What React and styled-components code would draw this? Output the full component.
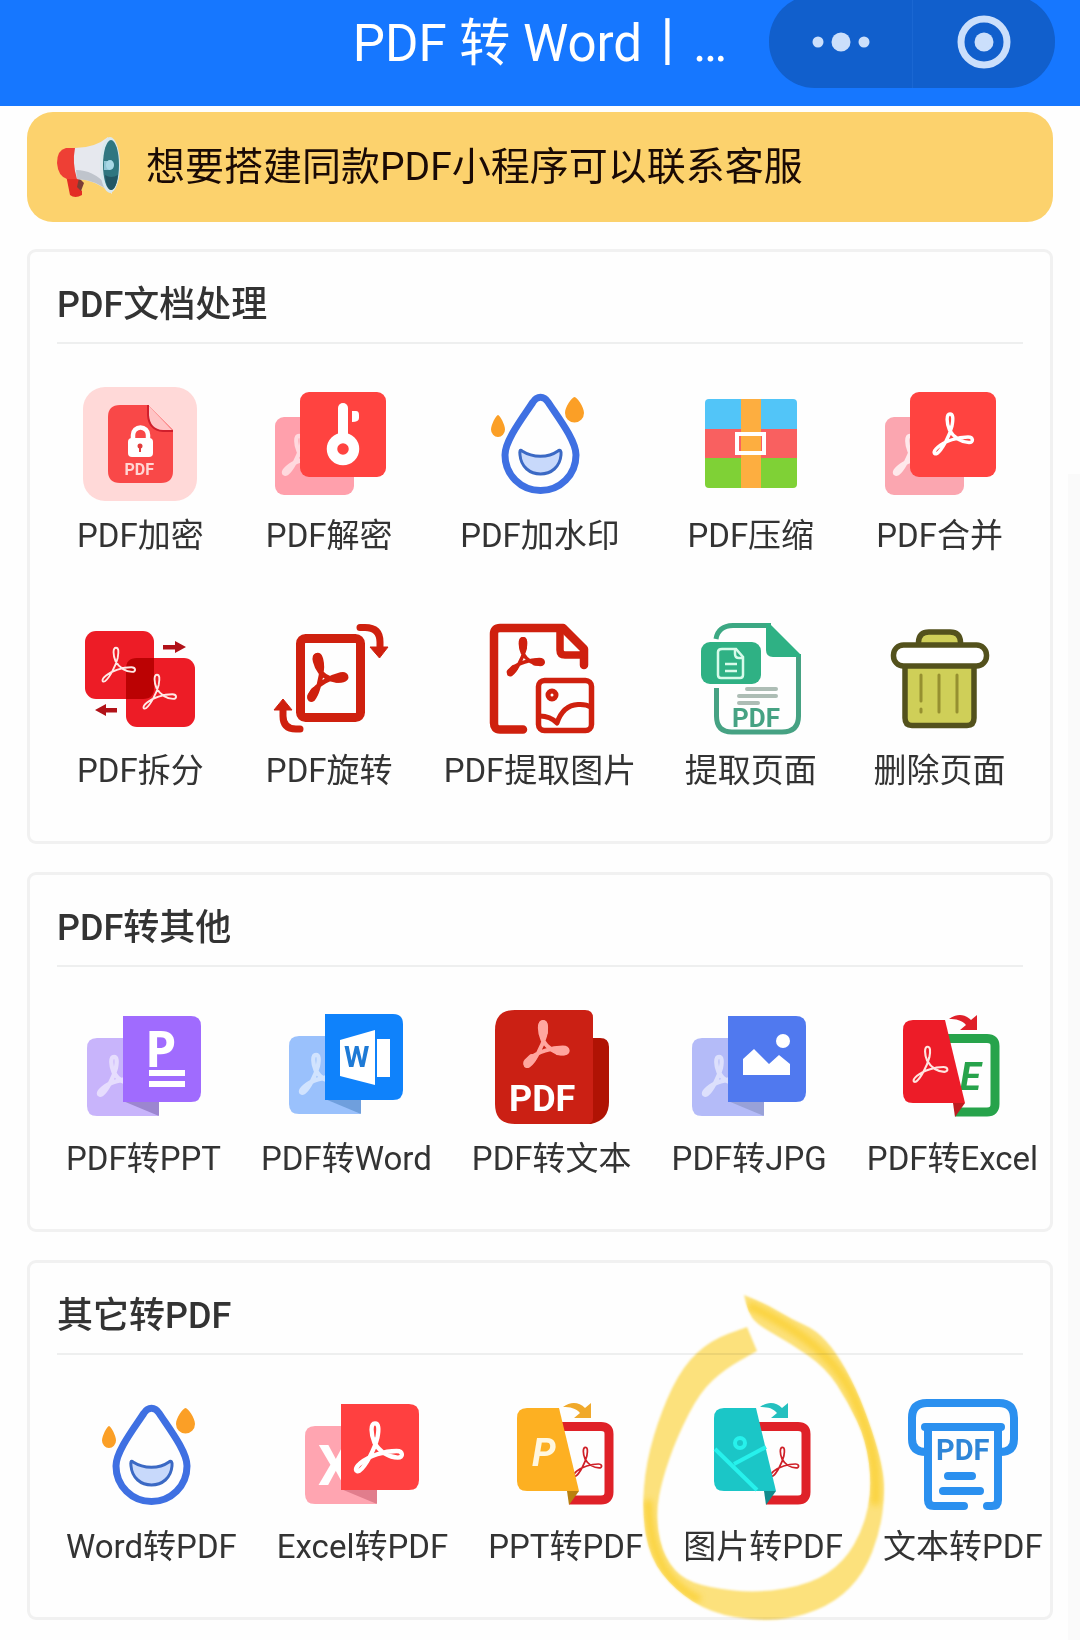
import React from "react";
import styled, { createGlobalStyle } from "styled-components";

const GlobalStyle = createGlobalStyle`
  * { box-sizing: border-box; }
  body {
    margin: 0;
    background: #fefefe;
    color: #333;
    font-family: Roboto, "Noto Sans CJK SC", sans-serif;
  }
  button { font: inherit; color: inherit; background: none; border: 0; padding: 0; cursor: pointer; }
`;

const Page = styled.div`
  position: relative;
  min-height: 100vh;
`;

const ScrollTrack = styled.div`
  position: absolute;
  top: 474px;
  right: 0;
  bottom: 0;
  width: 12px;
  background: #fafafa;
`;

const TopBar = styled.header`
  position: relative;
  display: flex;
  justify-content: center;
  height: 106px;
  padding-top: 9px;
  overflow: hidden;
  background: #1677ff;
`;

const AppTitle = styled.h1`
  margin: 0;
  font-size: 51px;
  font-weight: 400;
  line-height: 70px;
  color: #fff;
  white-space: nowrap;
`;

const Capsule = styled.div`
  position: absolute;
  top: -5px;
  right: 25px;
  display: flex;
  width: 286px;
  height: 93px;
  border-radius: 46px;
  background: #115fcc;
`;

const CapsuleButton = styled.button`
  flex: 1;
  display: flex;
  align-items: center;
  justify-content: center;
  & + & { box-shadow: inset 1px 0 0 #1a67d2; }
`;

const Content = styled.main`
  display: flex;
  flex-direction: column;
  padding: 6px 27px 21px;
`;

const Notice = styled.section`
  display: flex;
  align-items: center;
  gap: 24px;
  height: 110px;
  margin-bottom: 27px;
  padding: 0 30px;
  border-radius: 26px;
  background: #fcd26d;
`;

const NoticeText = styled.p`
  margin: 0;
  font-size: 39px;
  line-height: 54px;
  color: #1a0a05;
`;

const Cards = styled.div`
  display: flex;
  flex-direction: column;
  gap: 28px;
`;

const Card = styled.section`
  padding: 28px 27px 47px;
  border: 3px solid #f1f1f1;
  border-radius: 9px;
`;

const CardTitle = styled.h2`
  margin: 0 0 43px;
  padding-bottom: 12px;
  border-bottom: 2px solid #eeefef;
  font-size: 36px;
  font-weight: 500;
  line-height: 50px;
`;

const Grid = styled.div`
  display: grid;
  grid-template-columns: repeat(5, 1fr);
  row-gap: 63px;
  margin: 0 -11px;
`;

const Tile = styled.button`
  position: relative;
  display: flex;
  flex-direction: column;
  align-items: center;
  gap: 12px;
  padding: 0 20px;
  white-space: nowrap;
`;

const Label = styled.span`
  font-size: 33px;
  line-height: 46px;
`;

const IconSvg = styled.svg`
  display: block;
  width: 114px;
  height: 114px;
  overflow: visible;
  font-family: Roboto, sans-serif;
  font-weight: 700;
`;

const Marker = styled.svg`
  position: absolute;
  top: -108px;
  left: 50%;
  width: 260px;
  height: 340px;
  margin-left: -132px;
  overflow: visible;
  mix-blend-mode: multiply;
  pointer-events: none;
`;

const Icon = ({ children }) => (
  <IconSvg viewBox="0 0 114 114" fill="none" aria-hidden="true">
    {children}
  </IconSvg>
);

/* Three-lobed Acrobat ribbon on a 46-unit square */
const Ribbon = ({ x, y, s = 1, color = "#fff", w = 3.4, opacity = 1, turn = 0, solid }) => (
  <g transform={`translate(${x} ${y}) rotate(${turn}) scale(${s})`} stroke={color} opacity={opacity}>
    <path
      d="M20 2C16 2 16.500 11 19.500 18C24 26 32 30.500 39 30.500C44 30.500 43.500 25 38 25C28 25 15 29 8 35C2 40 4 43 7 41.500C12 38 19.500 24 22 14C23.500 6 23 2 20 2Z"
      strokeWidth={w}
      strokeLinejoin="round"
    />
    {solid && <path d="M20 4L20.500 11M39 28H34M6 39L10 35" strokeWidth="8" strokeLinecap="round" />}
  </g>
);

const Encrypt = () => (
  <Icon>
    <rect width="114" height="114" rx="22" fill="#ffd9d8" />
    <path d="M37 18H65L90 43V84Q90 96 78 96H37Q25 96 25 84V30Q25 18 37 18Z" fill="#f94848" />
    <path d="M65 18L90 44H80Q65 42 65 28Z" fill="#ffc4c5" />
    <path d="M65 18V28Q66 43 80 44H90" stroke="#d01f2c" strokeWidth="2" />
    <path d="M50 53V48a7.5 7.500 0 0 1 15 0V53" stroke="#fff" strokeWidth="4.500" />
    <rect x="45" y="51" width="25" height="19" rx="4" fill="#fff" />
    <circle cx="57" cy="59" r="2.500" fill="#e23c3c" />
    <path d="M57 60V65" stroke="#e23c3c" strokeWidth="2" />
    <text x="41.500" y="88" fontSize="16" fill="#ffd5d3">PDF</text>
  </Icon>
);

const Decrypt = () => (
  <Icon>
    <rect x="3" y="30" width="79" height="78" rx="9" fill="#ffa0ac" />
    <Ribbon x={8} y={47} s={0.95} w={4.5} opacity={0.6} />
    <rect x="28" y="5" width="86" height="85" rx="9" fill="#ff4340" />
    <path d="M71 21V48" stroke="#fff" strokeWidth="10" strokeLinecap="round" />
    <path d="M80 24H84Q87 24 87 28V31Q87 35 80 35Z" fill="#fff" />
    <circle cx="71" cy="62" r="11" stroke="#fff" strokeWidth="10.500" />
  </Icon>
);

const Droplet = () => (
  <Icon>
    <path
      d="M50 15C54 8.500 61 8.500 65 15C74 29 93 53 93 68C93 88 77 103.500 57.500 103.500C38 103.500 22 88 22 68C22 53 41 29 50 15Z"
      stroke="#3f70e2"
      strokeWidth="7"
    />
    <path
      d="M39 64C50 71 65 71 75 64C77 62 78.500 64 78 68C77 80 68 87 57.500 87C47 87 38 80 37 68C36.500 64 37 62 39 64Z"
      fill="#c8d9fb"
      stroke="#3b69c4"
      strokeWidth="3"
      strokeLinejoin="round"
    />
    <path d="M15 28C17 28 22 38 22 42.500a7 7.500 0 0 1 -14 0C8 38 13 28 15 28Z" fill="#fb9f26" />
    <path d="M91.500 10C94 10 101 20 101 26a9.500 9.500 0 0 1 -19 0C82 20 89 10 91.500 10Z" fill="#fb9f26" />
  </Icon>
);

const Compress = () => (
  <Icon>
    <path d="M15 12H99Q103 12 103 16V42H11V16Q11 12 15 12Z" fill="#52c5f8" />
    <path d="M11 42H103V71H11Z" fill="#f96060" />
    <path d="M11 71H103V97Q103 101 99 101H15Q11 101 11 97Z" fill="#7fd136" />
    <rect x="47" y="12" width="20" height="89" fill="#fdae40" />
    <rect x="43" y="47" width="27" height="19" stroke="#fff" strokeWidth="4" />
  </Icon>
);

const Merge = () => (
  <Icon>
    <rect x="2" y="30" width="79" height="78" rx="9" fill="#fba6b0" />
    <Ribbon x={8} y={47} s={0.95} w={4.5} opacity={0.75} />
    <rect x="27" y="5" width="86" height="85" rx="9" fill="#ff4340" />
    <Ribbon x={47} y={25} />
  </Icon>
);

const Split = () => (
  <Icon>
    <rect x="2" y="9" width="69" height="68" rx="11" fill="#ed1c26" />
    <rect x="43" y="36" width="69" height="69" rx="11" fill="#ed1c26" />
    <path d="M54 36H71V66Q71 77 60 77H43V47Q43 36 54 36Z" fill="#bb0203" />
    <Ribbon x={16} y={24} s={0.85} w={2.2} color="#ffe9e6" />
    <Ribbon x={57} y={51} s={0.85} w={2.2} color="#ffe9e6" />
    <path d="M80 23H92V19L103 25L92 31V27.500H80Z" fill="#b11218" />
    <path d="M34 86H23V82L12 88L23 94V90.500H34Z" fill="#b11218" />
  </Icon>
);

const Rotate = () => (
  <Icon>
    <rect x="28.500" y="16.500" width="60" height="79" rx="5" stroke="#cf200e" strokeWidth="9" />
    <Ribbon x={24} y={36} s={1.05} turn={-13} w={4.5} color="#cf200e" solid />
    <path d="M88 5.500H93Q108 5.500 108 20V27" stroke="#cf200e" strokeWidth="7" strokeLinecap="round" />
    <path d="M98 25H116L107.500 36Z" fill="#cf200e" stroke="#cf200e" strokeLinejoin="round" />
    <path d="M28 107H24Q11 107 11 94V87" stroke="#cf200e" strokeWidth="7" strokeLinecap="round" />
    <path d="M2 88H20L11 77Z" fill="#cf200e" stroke="#cf200e" strokeLinejoin="round" />
  </Icon>
);

const ExtractImage = () => (
  <Icon>
    <g stroke="#cf200e" strokeLinecap="round" strokeLinejoin="round">
      <path d="M40 107.500H17Q11 107.500 11 101V12Q11 6 17 6H80L101 27V43" strokeWidth="8.500" />
      <path d="M77 8V28Q77 33 82 33H101" strokeWidth="7.500" />
      <rect x="55.500" y="58.500" width="53" height="50" rx="6" strokeWidth="5.500" />
      <path d="M57 94C64 94 69 96 74 101C78 89 86 83 95 82.500Q103 82 108 85" strokeWidth="5" />
      <circle cx="69" cy="73" r="4" strokeWidth="5" />
    </g>
    <Ribbon x={22} y={15} s={0.9} w={4} color="#cf200e" solid />
  </Icon>
);

const ExtractPage = () => (
  <Icon>
    <path d="M22 17Q24 4 39 3.500H77" stroke="#3ca883" strokeWidth="5" />
    <path d="M104.500 32V94Q104.500 110 88 110H38Q22.500 110 22.500 94V66" stroke="#46a283" strokeWidth="5" />
    <path d="M72 1H75L107 33V35H79Q72 35 72 28Z" fill="#2fb184" />
    <rect x="7" y="20" width="60" height="42" rx="9" fill="#2fb184" />
    <g stroke="#d8fbea" strokeWidth="2.500">
      <path d="M28 27H42L49 35V53Q49 56 46 56H27Q24 56 24 53V30Q24 27 28 27Z" />
      <path d="M41 27V32Q41 36 45 36H49M31 42H43M31 49H43" />
    </g>
    <path d="M53 67H82M45 74H82M45 81H64" stroke="#adbdb5" strokeWidth="4" strokeLinecap="round" />
    <text x="38" y="105" fontSize="26" fill="#46a283">PDF</text>
  </Icon>
);

const Trash = () => (
  <Icon>
    <g stroke="#53511c" strokeWidth="5.500">
      <path d="M35.500 24V20Q36 10 46 10H67Q77 10 77.500 20V24" fill="#cfcf58" />
      <path d="M22 42V96Q22 103.500 29 103.500H84Q91 103.500 91 96V42Z" fill="#cfcf58" />
      <rect x="10.500" y="23" width="93" height="21" rx="10" fill="#fff" />
    </g>
    <path d="M38 53V79M38 87V90M56 53V90M74 53V90" stroke="#969030" strokeWidth="3" strokeLinecap="round" />
  </Icon>
);

/* Two overlapping sheets joined by a folded corner */
const Sheets = ({ back, front, fold, top = 6, behind, children }) => (
  <Icon>
    <g transform={`translate(0 ${top})`}>
      <path d="M10 22H71V100H10Q0 100 0 90V32Q0 22 10 22Z" fill={back} />
      {behind || <Ribbon x={8} y={39} s={0.95} w={4.5} opacity={0.55} />}
      <path d="M36 85H72V100Z" fill={fold} />
      <path d="M36 0H104Q114 0 114 10V76Q114 86 104 86H36Z" fill={front} />
      {children}
    </g>
  </Icon>
);

const ToPpt = () => (
  <Sheets back="#c8b4fb" front="#a06bfe" fold="#9c86d0">
    <text x="58" y="51" fontSize="50" fontFamily="Open Sans" fill="#fff">P</text>
    <path d="M62 57H98M62 68H98" stroke="#fff" strokeWidth="6" />
  </Sheets>
);

const ToWord = () => (
  <Sheets back="#9ac1fc" front="#0f82fb" fold="#6f9fdd" top={4}>
    <path d="M51 26L86 16V71L51 62Z" fill="#fff" />
    <rect x="88" y="25" width="13" height="38" fill="#fff" />
    <text x="55" y="53" fontSize="29" fill="#1e7ad6">W</text>
  </Sheets>
);

const ToText = () => (
  <Icon>
    <path d="M90 28H105Q114 28 114 37V92Q114 110 96 114H90Z" fill="#b01304" />
    <path d="M20 0H90Q98 0 98 8V108Q98 112 94 114H20Q0 114 0 94V20Q0 0 20 0Z" fill="#cb2014" />
    <Ribbon x={26} y={10} s={1.1} w={3.6} color="#ffa69f" solid />
    <text x="14" y="101" fontSize="36" fill="#fff">PDF</text>
  </Icon>
);

const ToJpg = () => (
  <Sheets back="#b4bbf8" front="#5079ef" fold="#98a1d8">
    <circle cx="91" cy="25" r="7" fill="#fff" />
    <path d="M51 59V43L62 33L77 48L87 39L98 48V59Z" fill="#fff" />
  </Sheets>
);

/* Slanted cover opening onto a framed page, with a turning arrow */
const Flip = ({ cover, frame, fold, arrow, page, children }) => (
  <Icon>
    <path d="M50 28.500H92Q100 28.500 100 36V94Q100 102 92 102H60" stroke={frame} strokeWidth="9" />
    {page}
    <path d="M18 10H50L70 93H18Q8 93 8 83V20Q8 10 18 10Z" fill={cover} />
    <path d="M58 93H70L60 107Z" fill={fold} />
    <path d="M54 9C62 3 70 4 76 10L82 5V20H65L71 15C67 10 61 9 54 9Z" fill={arrow} />
    {children}
  </Icon>
);

const ToExcel = () => (
  <Flip
    cover="#ed1c28"
    frame="#27a34b"
    fold="#bd1c20"
    arrow="#df2029"
    page={<text x="65" y="80" fontSize="38" fontStyle="italic" fill="#27a34b">E</text>}
  >
    <Ribbon x={15} y={35} s={0.88} w={2.4} color="#ffe5df" />
  </Flip>
);

const PagePdf = () => <Ribbon x={62} y={48} s={0.72} w={2.4} color="#cf2028" />;

const PptToPdf = () => (
  <Flip cover="#fdb022" frame="#df2128" fold="#b9800f" arrow="#f0a92b" page={<PagePdf />}>
    <text x="23" y="68" fontSize="38" fontStyle="italic" fill="#fff7df">P</text>
  </Flip>
);

const ImageToPdf = () => (
  <Flip cover="#1bc6c7" frame="#df2128" fold="#128b8d" arrow="#25c0bf" page={<PagePdf />}>
    <g stroke="#27f1ec" strokeWidth="4">
      <circle cx="34" cy="45" r="5" />
      <path d="M9 51L51 92M28 66L60 49" />
    </g>
  </Flip>
);

const ExcelToPdf = () => (
  <Sheets
    back="#ffa5b1"
    front="#ff4040"
    fold="#e17d8c"
    behind={<text x="13" y="81" fontSize="56" fill="#fff">X</text>}
  >
    <Ribbon x={46} y={17} s={1.2} w={3.6} />
  </Sheets>
);

const TextToPdf = () => (
  <Icon>
    <g stroke="#2b90ef" strokeWidth="8" strokeLinecap="round">
      <path d="M20 54Q6 54 6 41V20Q6 5 21 5H93Q108 5 108 20V41Q108 54 94 54" />
      <path d="M19 29H95" />
      <path d="M22 29V102Q22 108 28 108H58M81 108H86Q92 108 92 102V29" />
      <path d="M42 78H66M37 93H74" />
    </g>
    <text x="30" y="62" fontSize="29" fill="#2f86d8">PDF</text>
  </Icon>
);

const Megaphone = () => (
  <svg width="65" height="60" viewBox="0 0 65 60" aria-hidden="true">
    <path d="M9 38L13 58Q18 62 25 58V54Q22 52 24 49L22 38Z" fill="#e32d24" />
    <path d="M22 41L27 46L24 54L20 50Z" fill="#7c3d35" />
    <path d="M22 11H9Q0 13 0 26Q1 39 10 42H22Z" fill="#ee3f35" />
    <path d="M18 11Q38 11 51 0L55 57Q40 43 20 42Q15 26 18 11Z" fill="#e6e8ee" />
    <path d="M19 33Q36 33 50 48L54 56Q40 43 20 42Z" fill="#bfc4cc" />
    <ellipse cx="53" cy="28" rx="10" ry="28" fill="#d9e8ee" />
    <ellipse cx="54" cy="28" rx="8" ry="25" fill="#2f7680" />
    <path d="M48 38Q54 42 61 38Q59 53 54 53Q49 52 48 38Z" fill="#225663" />
    <path d="M47 24H53V33H47Z" fill="#8fc5d5" />
    <ellipse cx="53" cy="28" rx="4" ry="5" fill="#a8d8e6" />
  </svg>
);

const MARK_OUTLINE = [
  [744, 1295], [744, 1295], [768, 1305], [793, 1320], [816, 1330], [836, 1352], [856, 1388], [872, 1430],
  [882, 1465], [885, 1492], [880, 1532], [864, 1573], [836, 1602], [796, 1618], [759, 1621], [711, 1613],
  [675, 1590], [650, 1558], [642, 1513], [646, 1462], [662, 1409], [683, 1366], [711, 1340], [747, 1327],
  [747, 1327], [757, 1351], [757, 1351], [725, 1369], [700, 1392], [677, 1437], [662, 1480], [656, 1513],
  [661, 1550], [679, 1577], [709, 1588], [759, 1593], [811, 1584], [844, 1562], [864, 1527], [872, 1487],
  [866, 1440], [848, 1402], [826, 1368], [790, 1343], [756, 1324], [748, 1311],
];

const smoothClosed = (pts) => {
  const mid = (a, b) => [(a[0] + b[0]) / 2, (a[1] + b[1]) / 2];
  const start = mid(pts[pts.length - 1], pts[0]);
  return `M${start}` + pts.map((p, i) => `Q${p} ${mid(p, pts[(i + 1) % pts.length])}`).join("") + "Z";
};

const HandCircle = () => (
  <Marker viewBox="631 1290 260 340" aria-hidden="true">
    <defs>
      <filter id="soft" x="-10%" y="-10%" width="120%" height="120%">
        <feGaussianBlur stdDeviation="1.200" />
      </filter>
      <filter id="softer" x="-30%" y="-30%" width="160%" height="160%">
        <feGaussianBlur stdDeviation="3" />
      </filter>
      <clipPath id="mark">
        <path d={smoothClosed(MARK_OUTLINE)} />
      </clipPath>
    </defs>
    <path d={smoothClosed(MARK_OUTLINE)} fill="#fde27c" filter="url(#soft)" />
    <g clipPath="url(#mark)">
      <g fill="none" stroke="#fcd43c" filter="url(#softer)">
        <path d="M748 1305C800 1330 838 1357 857 1405C872 1440 878 1470 875 1505" strokeWidth="9" />
        <path d="M648 1500C650 1555 665 1583 700 1600" strokeWidth="8" />
      </g>
    </g>
  </Marker>
);

const SECTIONS = [
  {
    title: "PDF文档处理",
    tools: [
      ["PDF加密", Encrypt],
      ["PDF解密", Decrypt],
      ["PDF加水印", Droplet],
      ["PDF压缩", Compress],
      ["PDF合并", Merge],
      ["PDF拆分", Split],
      ["PDF旋转", Rotate],
      ["PDF提取图片", ExtractImage],
      ["提取页面", ExtractPage],
      ["删除页面", Trash],
    ],
  },
  {
    title: "PDF转其他",
    tools: [
      ["PDF转PPT", ToPpt],
      ["PDF转Word", ToWord],
      ["PDF转文本", ToText],
      ["PDF转JPG", ToJpg],
      ["PDF转Excel", ToExcel],
    ],
  },
  {
    title: "其它转PDF",
    marked: "图片转PDF",
    tools: [
      ["Word转PDF", Droplet],
      ["Excel转PDF", ExcelToPdf],
      ["PPT转PDF", PptToPdf],
      ["图片转PDF", ImageToPdf],
      ["文本转PDF", TextToPdf],
    ],
  },
];

export default function App() {
  return (
    <Page lang="zh-CN">
      <GlobalStyle />
      <TopBar>
        <AppTitle>PDF 转 Word丨…</AppTitle>
        <Capsule>
          <CapsuleButton aria-label="更多">
            <svg width="58" height="20" viewBox="0 0 58 20" fill="#cbdffb">
              <circle cx="6" cy="10" r="5.500" />
              <circle cx="29" cy="10" r="9.500" />
              <circle cx="52" cy="10" r="5.500" />
            </svg>
          </CapsuleButton>
          <CapsuleButton aria-label="关闭">
            <svg width="54" height="54" viewBox="0 0 54 54">
              <circle cx="27" cy="27" r="23" fill="none" stroke="#cbdffb" strokeWidth="7" />
              <circle cx="27" cy="27" r="9.500" fill="#cbdffb" />
            </svg>
          </CapsuleButton>
        </Capsule>
      </TopBar>
      <Content>
        <Notice>
          <Megaphone />
          <NoticeText>想要搭建同款PDF小程序可以联系客服</NoticeText>
        </Notice>
        <Cards>
          {SECTIONS.map(({ title, tools, marked }) => (
            <Card key={title}>
              <CardTitle>{title}</CardTitle>
              <Grid>
                {tools.map(([name, Glyph]) => (
                  <Tile key={name}>
                    <Glyph />
                    <Label>{name}</Label>
                    {name === marked && <HandCircle />}
                  </Tile>
                ))}
              </Grid>
            </Card>
          ))}
        </Cards>
      </Content>
      <ScrollTrack />
    </Page>
  );
}
